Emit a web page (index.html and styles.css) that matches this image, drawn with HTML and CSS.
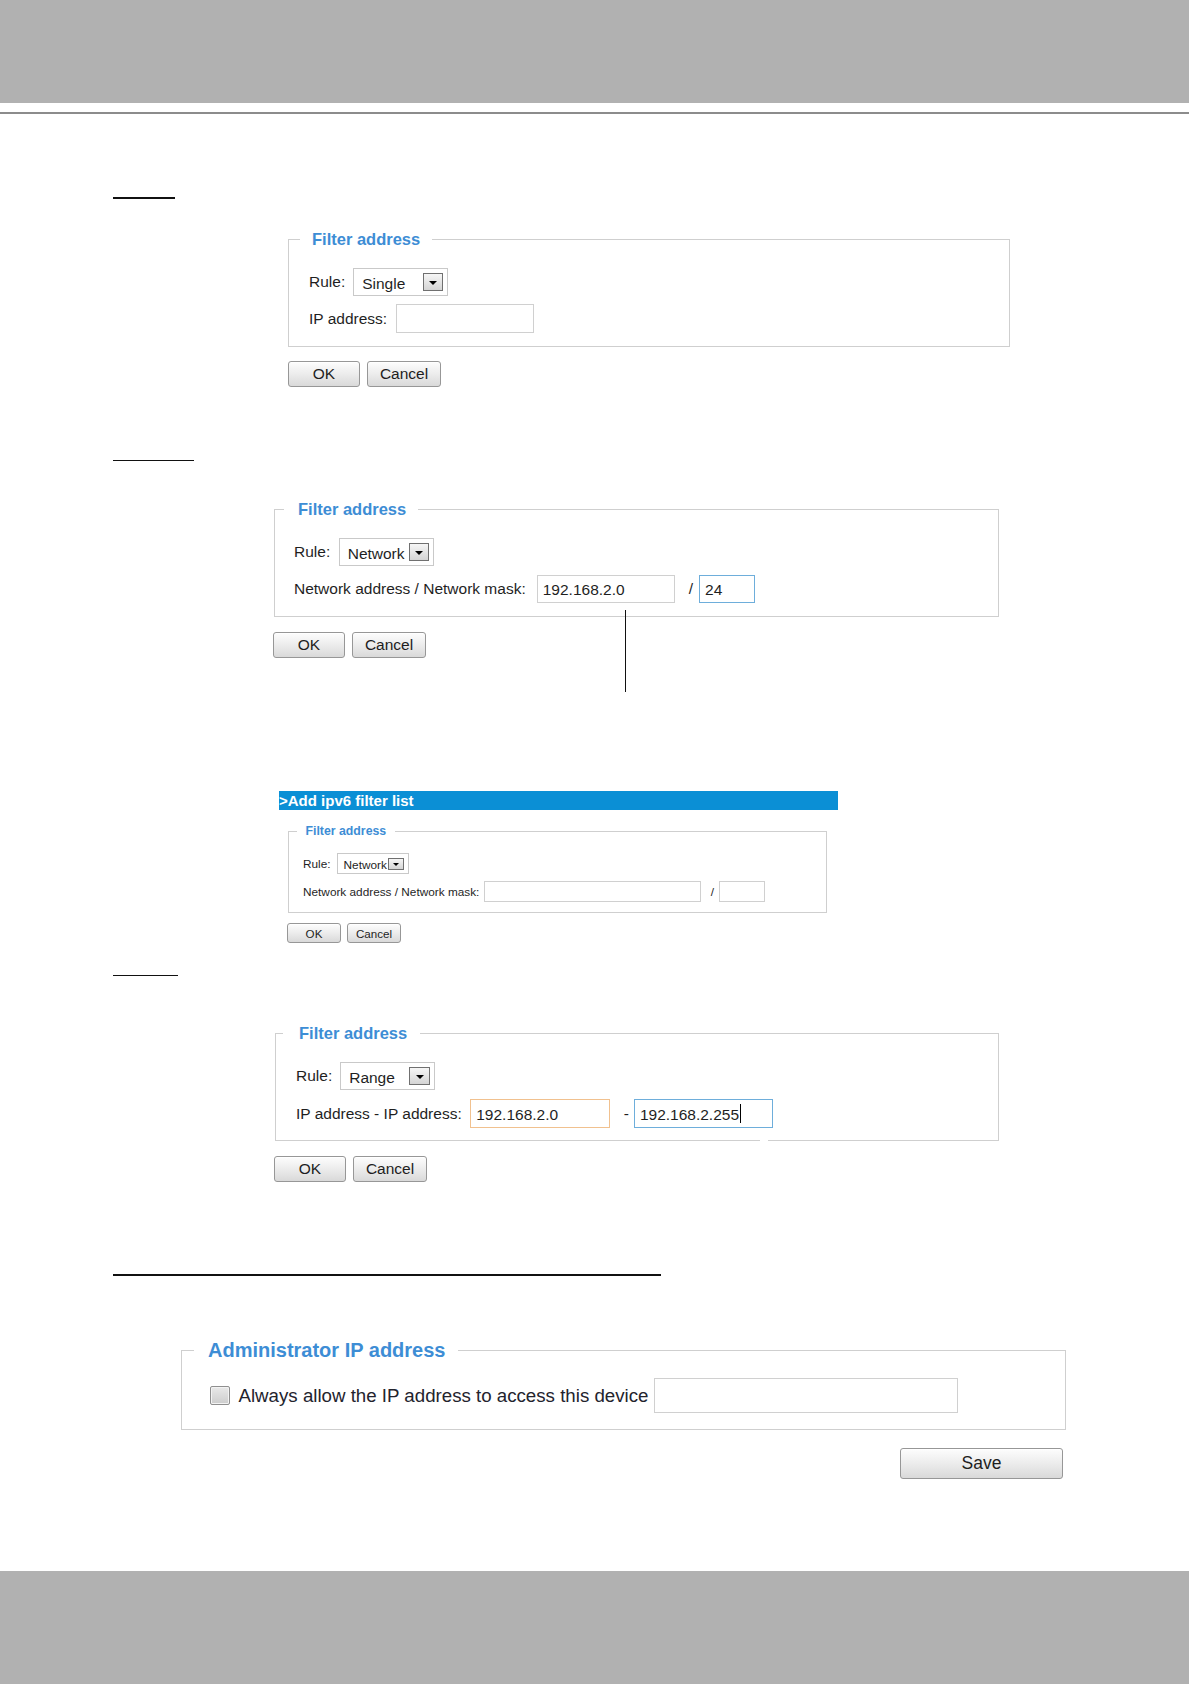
FILE: index.html
```html
<!DOCTYPE html>
<html lang="en">
<head>
<meta charset="utf-8">
<title>Filter address</title>
<link rel="stylesheet" href="styles.css">
</head>
<body>
<div class="band band-top"></div>
<div class="top-rule"></div>
<main class="doc">

  <section class="example">
    <div class="uline uline-1"></div>
    <fieldset class="fs fs-md fs-1">
      <legend>Filter address</legend>
      <div class="rows">
        <div class="row">
          <span class="lbl">Rule:</span>
          <div class="sel sel-md s1"><span class="sel-text">Single</span><span class="drop"><i class="tri"></i></span></div>
        </div>
        <div class="row">
          <span class="lbl">IP address:</span>
          <div class="field f1-ip"></div>
        </div>
      </div>
    </fieldset>
    <div class="btns btns-md b1"><button class="btn ok">OK</button><button class="btn cancel">Cancel</button></div>
  </section>

  <div class="uline uline-2"></div>
  <section class="example ex-2">
    <fieldset class="fs fs-md fs-2">
      <legend>Filter address</legend>
      <div class="rows">
        <div class="row">
          <span class="lbl">Rule:</span>
          <div class="sel sel-md s2"><span class="sel-text">Network</span><span class="drop"><i class="tri"></i></span></div>
        </div>
        <div class="row">
          <span class="lbl">Network address / Network mask:</span>
          <div class="field f2-net"><span class="val">192.168.2.0</span></div>
          <span class="sep f2-slash">/</span>
          <div class="field focus f2-mask"><span class="val">24</span></div>
        </div>
      </div>
    </fieldset>
    <div class="btns btns-md b2"><button class="btn ok">OK</button><button class="btn cancel">Cancel</button></div>
    <span class="pointer"></span>
  </section>

  <div class="bar">&gt;Add ipv6 filter list</div>
  <fieldset class="fs fs-sm fs-3">
    <legend>Filter address</legend>
    <div class="rows">
      <div class="row">
        <span class="lbl">Rule:</span>
        <div class="sel sel-sm s3"><span class="sel-text">Network</span><span class="drop"><i class="tri"></i></span></div>
      </div>
      <div class="row">
        <span class="lbl">Network address / Network mask:</span>
        <div class="field f3-net"></div>
        <span class="sep f3-slash">/</span>
        <div class="field f3-mask"></div>
      </div>
    </div>
  </fieldset>
  <div class="btns btns-sm b3"><button class="btn ok">OK</button><button class="btn cancel">Cancel</button></div>

  <div class="uline uline-3"></div>
  <section class="example ex-4">
    <fieldset class="fs fs-md fs-4">
      <legend>Filter address</legend>
      <div class="rows">
        <div class="row">
          <span class="lbl">Rule:</span>
          <div class="sel sel-md s4"><span class="sel-text">Range</span><span class="drop"><i class="tri"></i></span></div>
        </div>
        <div class="row">
          <span class="lbl">IP address - IP address:</span>
          <div class="field warn f4-from"><span class="val">192.168.2.0</span></div>
          <span class="sep f4-dash">-</span>
          <div class="field focus f4-to"><span class="val">192.168.2.255</span><span class="caret"></span></div>
        </div>
      </div>
    </fieldset>
    <div class="btns btns-md b4"><button class="btn ok">OK</button><button class="btn cancel">Cancel</button></div>
    <span class="border-gap"></span>
  </section>

  <div class="uline uline-4"></div>
  <fieldset class="fs fs-5">
    <legend>Administrator IP address</legend>
    <div class="row">
      <span class="checkbox"></span>
      <span class="lbl admin-lbl">Always allow the IP address to access this device</span>
      <div class="field f5-ip"></div>
    </div>
  </fieldset>
  <div class="save-row"><button class="btn save">Save</button></div>

</main>
<div class="band band-bottom"></div>
</body>
</html>
```

FILE: styles.css
```css
* { box-sizing: border-box; }

html, body {
  margin: 0;
  padding: 0;
  background: #ffffff;
}

body {
  width: 1191px;
  height: 1684px;
  overflow: hidden;
  font-family: "Liberation Sans", Arial, sans-serif;
  color: #1f1f1f;
}

/* page chrome */
.band {
  width: 1189px;
  background: #b1b1b1;
}
.band-top { height: 103px; }
.band-bottom { height: 113px; margin-top: 92px; }

.top-rule {
  width: 1189px;
  height: 2px;
  margin-top: 9px;
  background: #8c8c8c;
}

.doc {
  padding-left: 113px;
}

/* heading underlines */
.uline { background: #111111; }
.uline-1 { width: 62px; height: 2px; margin-top: 83px; }
.uline-2 { width: 81px; height: 1px; margin-top: 73px; }
.uline-3 { width: 65px; height: 1px; margin-top: 32px; }
.uline-4 { width: 548px; height: 2px; margin-top: 92px; }

/* fieldsets */
.fs {
  margin: 0;
  min-width: 0;
  border: 1px solid #cfcfcf;
}
.fs legend {
  color: #3d8dd5;
  font-weight: bold;
  white-space: nowrap;
}

.fs-md { font-size: 15.5px; }
.fs-md legend {
  font-size: 16.5px;
  line-height: 20px;
}
.fs-sm { font-size: 11.8px; }
.fs-sm legend {
  font-size: 12.3px;
  line-height: 15px;
}

.rows {
  display: flex;
  flex-direction: column;
}
.row {
  display: flex;
  align-items: center;
}
.lbl { white-space: nowrap; }

/* instance 1 */
.fs-1 {
  width: 722px;
  margin: 30px 0 0 175px;
  padding: 19px 0 13px 20px;
}
.fs-1 legend { margin-left: -9px; padding: 0 12px; }
.fs-1 .rows { gap: 8px; }
.s1 { margin-left: 8px; }
.f1-ip { width: 138px; height: 29px; margin-left: 8.5px; }
.b1 { margin: 14px 0 0 175px; }

/* instance 2 */
.ex-2 { position: relative; margin-top: 38px; }
.fs-2 {
  width: 725px;
  margin: 0 0 0 161px;
  padding: 19px 0 13px 19px;
}
.fs-2 legend { margin-left: -10px; padding: 0 12px 0 14px; }
.fs-2 .rows { gap: 9px; }
.s2 { margin-left: 8.5px; }
.f2-net { width: 138px; height: 28px; margin-left: 11px; }
.f2-slash { margin-left: 14px; }
.f2-mask { width: 56px; height: 28px; margin-left: 6px; }
.b2 { margin: 15px 0 0 160px; }
.pointer {
  position: absolute;
  left: 512px;
  top: 111px;
  width: 1px;
  height: 82px;
  background: #111111;
}

/* instance 3 (ipv6) */
.bar {
  width: 559px;
  height: 19px;
  margin: 133px 0 0 166px;
  background: #0b8fd5;
  color: #ffffff;
  font-weight: bold;
  font-size: 15px;
  line-height: 19px;
  white-space: nowrap;
  overflow: hidden;
}
.fs-3 {
  width: 539px;
  margin: 14px 0 0 175px;
  padding: 14px 0 10px 14px;
}
.fs-3 legend { margin-left: -6px; padding: 0 8.5px; }
.fs-3 .rows { gap: 7px; }
.s3 { margin-left: 6px; }
.f3-net { width: 217px; height: 21px; margin-left: 5px; }
.f3-slash { margin-left: 9.5px; }
.f3-mask { width: 46px; height: 21px; margin-left: 4.5px; }
.b3 { margin: 10px 0 0 174px; }

/* instance 4 */
.ex-4 { position: relative; margin-top: 47px; }
.fs-4 {
  width: 724px;
  margin: 0 0 0 162px;
  padding: 19px 0 12px 20px;
}
.fs-4 legend { margin-left: -13px; padding: 0 13px 0 16px; }
.fs-4 .rows { gap: 9px; }
.s4 { margin-left: 8px; height: 28px; }
.f4-from { width: 140px; height: 29px; margin-left: 8.5px; }
.f4-dash { margin-left: 13.5px; }
.f4-to { width: 139px; height: 29px; margin-left: 5px; }
.b4 { margin: 15px 0 0 161px; }
.border-gap {
  position: absolute;
  left: 647px;
  top: 117px;
  width: 8px;
  height: 2px;
  background: #ffffff;
}

/* instance 5 (administrator) */
.fs-5 {
  width: 885px;
  margin: 62px 0 0 68px;
  padding: 16px 0 16px 28px;
}
.fs-5 legend {
  font-size: 20px;
  line-height: 24px;
  margin-left: -16px;
  padding: 0 13px 0 14px;
}
.checkbox {
  width: 20px;
  height: 19px;
  border: 1px solid #8f8f8f;
  border-radius: 2px;
  background: linear-gradient(#e9e9e9, #cdcdcd);
  box-shadow: inset 0 0 0 1px #f3f3f3;
}
.admin-lbl {
  font-size: 18.7px;
  margin-left: 8.5px;
  color: #23232d;
}
.f5-ip { width: 304px; height: 35px; margin-left: 6px; }

.save-row {
  width: 885px;
  margin: 18px 0 0 68px;
  padding-right: 3px;
  display: flex;
  justify-content: flex-end;
}

/* text fields */
.field {
  display: flex;
  align-items: center;
  border: 1px solid #d0d0d0;
  background: #ffffff;
  padding-left: 5px;
  white-space: nowrap;
}
.field .val { padding-top: 2px; }
.field.focus { border-color: #6eaedb; }
.field.warn { border-color: #f1c18f; }
.caret {
  display: inline-block;
  width: 1px;
  height: 19px;
  margin-left: 1px;
  background: #000000;
}
.sep { white-space: nowrap; }

/* selects */
.sel {
  display: flex;
  align-items: center;
  position: relative;
  border: 1px solid #c9c9c9;
  background: #ffffff;
  white-space: nowrap;
}
.sel-md { width: 95px; height: 28px; padding-left: 8px; }
.sel-md .sel-text { padding-top: 3px; }
.sel-sm { width: 72px; height: 21px; padding-left: 6px; }
.sel-sm .sel-text { padding-top: 2px; }
.drop {
  margin-left: auto;
  display: flex;
  align-items: center;
  justify-content: center;
  border: 1px solid #707070;
  background: linear-gradient(#f6f6f6, #d4d4d4);
}
.sel-md .drop { width: 20px; height: 18px; margin-right: 4px; }
.s4 .drop { width: 21px; }
.sel-sm .drop { width: 16px; height: 12px; margin-right: 4px; align-self: flex-end; margin-bottom: 3px; }
.tri {
  width: 0;
  height: 0;
  border-left: 4px solid transparent;
  border-right: 4px solid transparent;
  border-top: 4px solid #000000;
  margin-top: 2px;
}
.sel-sm .tri {
  border-left-width: 3px;
  border-right-width: 3px;
  border-top-width: 3px;
  margin-top: 1px;
}

/* buttons */
.btns { display: flex; }
.btns-md { gap: 7px; }
.btns-sm { gap: 6px; }
.btn {
  font-family: "Liberation Sans", Arial, sans-serif;
  color: #1e1e1e;
  padding: 0;
  margin: 0;
  border: 1px solid #979797;
  border-radius: 3px;
  background: linear-gradient(#fdfdfd, #ececec 50%, #d9d9d9);
  box-shadow: inset 0 1px 0 #ffffff;
}
.btns-md .btn { height: 26px; font-size: 15.5px; }
.btns-md .ok { width: 72px; }
.btns-md .cancel { width: 74px; }
.btns-sm .btn { height: 20px; font-size: 11.6px; }
.btns-sm .ok { width: 54px; }
.btns-sm .cancel { width: 54px; }
.save { width: 163px; height: 31px; font-size: 17.5px; }
```
